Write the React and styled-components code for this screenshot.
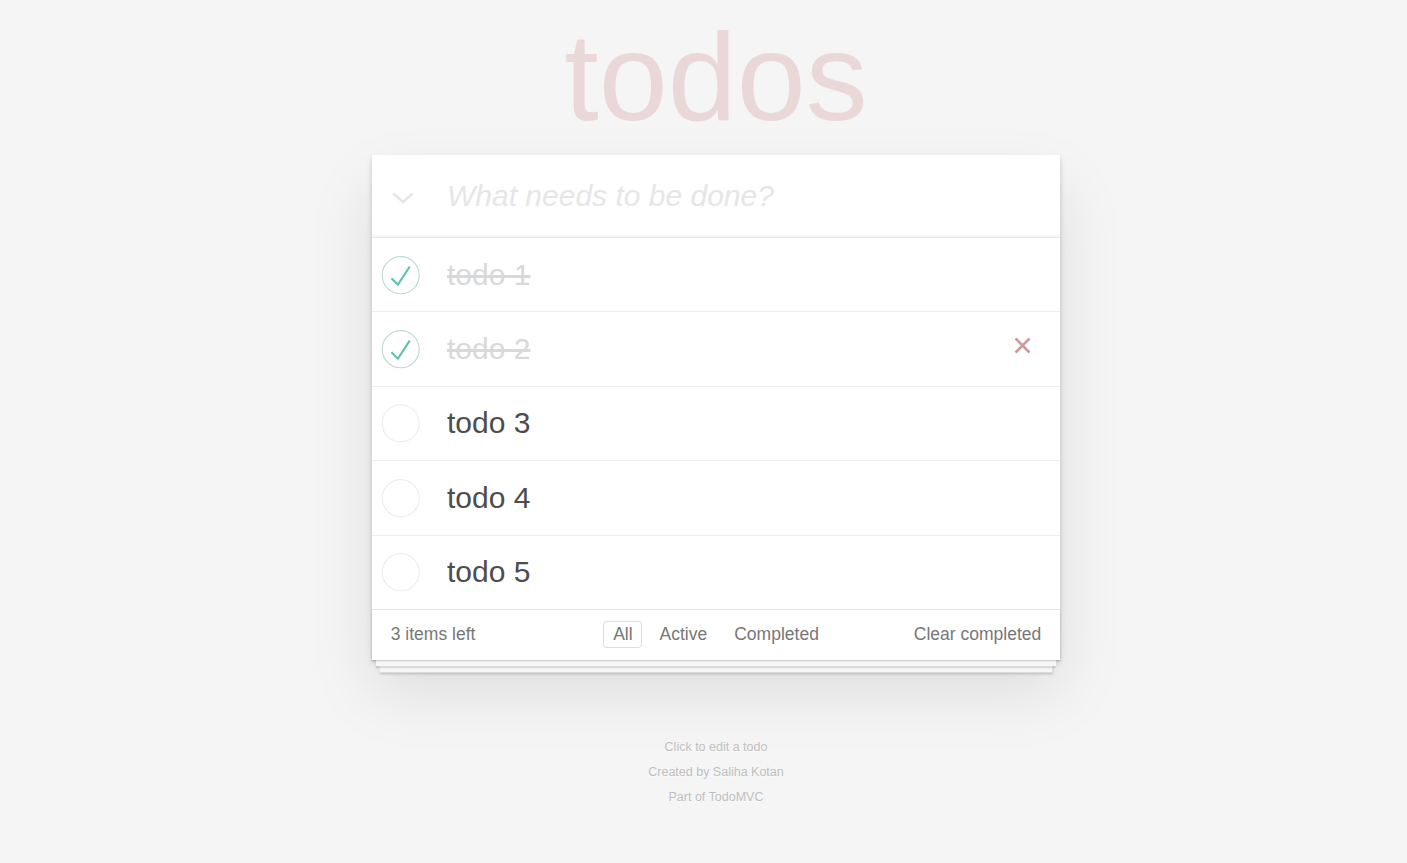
import React from 'react'
import styled, { createGlobalStyle } from 'styled-components'

const todos = [
  { id: 1, text: 'todo 1', completed: true },
  { id: 2, text: 'todo 2', completed: true, hovered: true },
  { id: 3, text: 'todo 3', completed: false },
  { id: 4, text: 'todo 4', completed: false },
  { id: 5, text: 'todo 5', completed: false },
]

const GlobalStyle = createGlobalStyle`
  body {
    margin: 0;
    background: #f5f5f5;
    color: #4d4d4d;
    font-family: "Liberation Sans", Helvetica, Arial, sans-serif;
    font-weight: 300;
  }
  * { box-sizing: border-box; }
`

const CheckToggle = ({ checked }) => (
  <ToggleIcon viewBox="-10 -18 100 135">
    <circle
      cx="50"
      cy="50"
      r="50"
      fill="none"
      stroke={checked ? '#bddad5' : '#ededed'}
      strokeWidth="3"
    />
    {checked && <path fill="#5dc2af" d="M72 25L42 71 27 56l-4 4 20 20 34-52z" />}
  </ToggleIcon>
)

const TodoItem = ({ item }) => (
  <Item>
    <CheckToggle checked={item.completed} />
    <Label completed={item.completed}>{item.text}</Label>
    {item.hovered && (
      <Destroy type="button">
        <svg width="17" height="17" viewBox="0 0 17 17">
          <path d="M1.5 1.5L15.5 15.5M15.5 1.5L1.5 15.5" stroke="#cc9a9a" strokeWidth="2.6" />
        </svg>
      </Destroy>
    )}
  </Item>
)

export default function App() {
  const left = todos.filter((t) => !t.completed).length

  return (
    <Page>
      <GlobalStyle />
      <Column>
        <Title>todos</Title>
        <TodoApp>
          <Header>
            <ToggleAll>
              <svg width="22" height="12" viewBox="0 0 22 12">
                <polyline points="1.5,1.5 11,10 20.5,1.5" fill="none" stroke="#e6e6e6" strokeWidth="2.6" />
              </svg>
            </ToggleAll>
            <NewTodo placeholder="What needs to be done?" />
          </Header>
          <List>
            {todos.map((t) => (
              <TodoItem key={t.id} item={t} />
            ))}
          </List>
          <Footer>
            <Count>{left} items left</Count>
            <Filters>
              <FilterLink selected>All</FilterLink>
              <FilterLink>Active</FilterLink>
              <FilterLink>Completed</FilterLink>
            </Filters>
            <ClearButton type="button">Clear completed</ClearButton>
          </Footer>
        </TodoApp>
        <Info>
          <p>Click to edit a todo</p>
          <p>Created by <span>Saliha Kotan</span></p>
          <p>Part of <span>TodoMVC</span></p>
        </Info>
      </Column>
    </Page>
  )
}

const Page = styled.div`
  display: flex;
  flex-direction: column;
  align-items: center;
  padding-top: 16px;
  min-height: 100vh;
`

const Column = styled.div`
  width: 688px;
  margin-left: 25px;
`

const Title = styled.h1`
  margin: 0 0 17px;
  height: 122px;
  font-size: 124px;
  line-height: 122px;
  font-weight: 100;
  text-align: center;
  color: rgba(175, 47, 47, 0.15);
  text-rendering: optimizeLegibility;
`

const TodoApp = styled.section`
  background: #fff;
  box-shadow: 0 2.5px 5px rgba(0, 0, 0, 0.2), 0 31px 62px rgba(0, 0, 0, 0.1);
`

const Header = styled.header`
  display: flex;
  align-items: center;
  height: 82px;
  box-shadow: inset 0 -2px 1px rgba(0, 0, 0, 0.03);
`

const ToggleAll = styled.div`
  width: 75px;
  padding-left: 20px;
  padding-top: 3px;
  display: flex;
  align-items: center;
`

const NewTodo = styled.input`
  flex: 1;
  height: 100%;
  border: none;
  outline: none;
  background: transparent;
  padding: 0 20px 0 0;
  font-family: inherit;
  font-size: 30px;
  font-weight: 300;
  color: #4d4d4d;

  &::placeholder {
    font-style: italic;
    color: #e6e6e6;
  }
`

const List = styled.ul`
  margin: 0;
  padding: 0;
  list-style: none;
  border-top: 1px solid #e6e6e6;
`

const Item = styled.li`
  display: flex;
  align-items: center;
  border-bottom: 1px solid #ededed;

  &:last-child {
    border-bottom: none;
  }
`

const ToggleIcon = styled.svg`
  width: 50px;
  height: 50px;
  flex-shrink: 0;
`

const Label = styled.label`
  flex: 1;
  padding: 18.7px 18.75px 18.7px 25px;
  font-size: 30px;
  line-height: 36px;
  word-break: break-all;
  color: ${({ completed }) => (completed ? '#d9d9d9' : '#4d4d4d')};
  text-decoration: ${({ completed }) => (completed ? 'line-through' : 'none')};
`

const Destroy = styled.button`
  width: 50px;
  height: 50px;
  margin: 0 12.5px 7px 0;
  padding: 0;
  border: none;
  background: none;
  display: flex;
  align-items: center;
  justify-content: center;
  cursor: pointer;
`

const Footer = styled.footer`
  display: grid;
  grid-template-columns: 1fr auto 1fr;
  align-items: center;
  height: 51px;
  padding: 0 18.75px;
  border-top: 1px solid #e6e6e6;
  color: #777;
  font-size: 17.5px;
  line-height: 25px;
  box-shadow: 0 1.25px 1.25px rgba(0, 0, 0, 0.2),
    0 10px 0 -3.75px #f6f6f6,
    0 11.25px 1.25px -3.75px rgba(0, 0, 0, 0.2),
    0 20px 0 -7.5px #f6f6f6,
    0 21.25px 2.5px -7.5px rgba(0, 0, 0, 0.2);
`

const Count = styled.span`
  text-align: left;
`

const Filters = styled.ul`
  display: flex;
  align-items: center;
  gap: 7.5px;
  margin: 0;
  padding: 0;
  list-style: none;
`

const FilterLink = styled.li`
  padding: 3.75px 8.75px;
  line-height: 17.5px;
  border: 1px solid ${({ selected }) => (selected ? 'rgba(175, 47, 47, 0.2)' : 'transparent')};
  border-radius: 3.75px;
  color: inherit;
  cursor: pointer;
`

const ClearButton = styled.button`
  justify-self: end;
  border: none;
  background: none;
  padding: 0;
  font-family: inherit;
  font-size: 17.5px;
  line-height: 25px;
  color: #777;
  cursor: pointer;
`

const Info = styled.footer`
  margin-top: 75.5px;
  text-align: center;
  color: #bfbfbf;
  font-size: 12.5px;
  line-height: 25px;
  text-shadow: 0 1px 0 rgba(255, 255, 255, 0.5);

  p {
    margin: 0;
  }
`
